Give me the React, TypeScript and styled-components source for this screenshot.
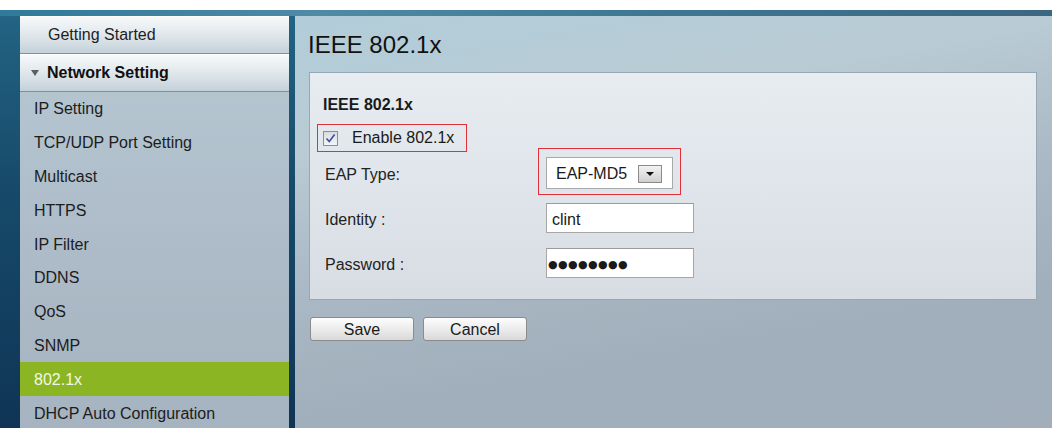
import React from 'react';
import styled, { createGlobalStyle, css } from 'styled-components';

const GlobalStyle = createGlobalStyle`
  html, body {
    margin: 0;
    padding: 0;
    background: #ffffff;
    font-family: "Liberation Sans", Arial, sans-serif;
    color: #1c1c1c;
  }
`;

const Page = styled.div`
  width: 1052px;
  height: 428px;
  padding-top: 10px;
  box-sizing: border-box;
  display: flex;
  flex-direction: column;
  overflow: hidden;
`;

const TopBand = styled.div`
  height: 6px;
  background: linear-gradient(to right, #2f7a9a, #4f8aa6 30%, #3f7894 60%, #3c6781);
`;

const Body = styled.div`
  flex: 1;
  display: flex;
  gap: 6px;
  padding-left: 20px;
  background: linear-gradient(to bottom, #236383, #174b6b 40%, #0f3455);
  min-height: 0;
`;

const Sidebar = styled.nav`
  width: 269px;
  display: flex;
  flex-direction: column;
  background: linear-gradient(to bottom, #b7c9d4, #aebdc9 50%, #a6b3c0);
  overflow: hidden;
`;

const Header = styled.div<{ $indent: number; $bold?: boolean }>`
  height: 36px;
  flex-shrink: 0;
  display: flex;
  align-items: center;
  gap: 8px;
  padding-left: ${p => p.$indent}px;
  background: linear-gradient(to bottom, #f7f9fa, #e2e9ed 45%, #c4d1d9);
  border-top: 1px solid #ffffff;
  border-bottom: 1px solid #7d909c;
  font-size: 16px;
  color: #1e1e1e;
  ${p =>
    p.$bold &&
    css`
      font-weight: bold;
      color: #101010;
    `}
`;

const Caret = styled.span`
  width: 0;
  height: 0;
  border-left: 4px solid transparent;
  border-right: 4px solid transparent;
  border-top: 6px solid #5b5f63;
`;

const NavItem = styled.div<{ $active?: boolean }>`
  height: 33.8px;
  flex-shrink: 0;
  display: flex;
  align-items: center;
  padding: 1px 0 0 14px;
  box-sizing: border-box;
  font-size: 16px;
  color: #1c1c1c;
  ${p =>
    p.$active &&
    css`
      background: #8cb523;
      color: #f4f7e8;
    `}
`;

const Main = styled.main`
  flex: 1;
  display: flex;
  flex-direction: column;
  padding: 15px 15px 0 14px;
  background: linear-gradient(170deg, #b1cdd9 0%, #b9cbd5 25%, #aab9c5 50%, #a1aebb 75%, #a2afbb 100%);
`;

const Title = styled.h1`
  margin: 0 0 0 -1px;
  height: 41px;
  font-size: 24px;
  font-weight: normal;
  color: #111;
  line-height: 28px;
`;

const Panel = styled.section`
  width: 728px;
  box-sizing: border-box;
  padding: 23px 0 21px 13px;
  border: 1px solid #97a8b4;
  background: linear-gradient(to bottom, #e6ecf0, #dfe5ea 50%, #d8dde3);
`;

const PanelHeading = styled.h2`
  margin: 0;
  font-size: 16px;
  line-height: 18px;
  font-weight: bold;
  color: #1a1a1a;
`;

const Row = styled.div<{ $top: number; $height: number }>`
  display: grid;
  grid-template-columns: 223px auto;
  align-items: center;
  margin-top: ${p => p.$top}px;
  height: ${p => p.$height}px;
  font-size: 16px;
  color: #222;
`;

const Label = styled.span`
  padding: 3px 0 0 2px;
`;

const CheckHighlight = styled.label`
  margin-left: -6px;
  width: 150px;
  height: 28px;
  box-sizing: border-box;
  border: 1px solid #e0303a;
  display: flex;
  align-items: center;
  gap: 14px;
  padding-left: 5px;
  font-size: 16px;
  color: #1a1a1a;
`;

const CheckBox = styled.span`
  width: 15px;
  height: 15px;
  box-sizing: border-box;
  border: 1px solid #8e8e8e;
  background: linear-gradient(to bottom, #d9dbde, #f4f5f6);
  display: flex;
  align-items: center;
  justify-content: center;
`;

const SelectWrap = styled.div`
  position: relative;
  width: 127px;
  height: 32px;
`;

const SelectHighlight = styled.span`
  position: absolute;
  inset: -9px -8px -6px -8px;
  border: 1px solid #e0303a;
  pointer-events: none;
`;

const SelectBox = styled.div`
  height: 100%;
  box-sizing: border-box;
  border: 1px solid #a9a9a9;
  background: #fff;
  display: flex;
  align-items: center;
  justify-content: space-between;
  padding: 1px 10px 0 9px;
  font-size: 16px;
  color: #1a1a1a;
`;

const DropButton = styled.span`
  width: 24px;
  height: 18px;
  box-sizing: border-box;
  border: 1px solid #8a8a8a;
  background: linear-gradient(to bottom, #f2f2f2, #d0d0d0);
  display: flex;
  align-items: center;
  justify-content: center;
`;

const DropArrow = styled.span`
  width: 0;
  height: 0;
  border-left: 4px solid transparent;
  border-right: 4px solid transparent;
  border-top: 4px solid #111;
`;

const TextInput = styled.input<{ $secret?: boolean }>`
  width: 148px;
  height: 30px;
  box-sizing: border-box;
  border: 1px solid #a7a7a7;
  border-top-color: #9a9a9a;
  background: #fff;
  padding: 3px 5px 0;
  margin: 0;
  font-family: "Liberation Sans", Arial, sans-serif;
  font-size: 16px;
  color: #1a1a1a;
  outline: none;
  ${p =>
    p.$secret &&
    css`
      padding: 2px 0 0 1px;
      font-family: "DejaVu Sans", sans-serif;
      font-size: 11px;
      letter-spacing: 0.4px;
    `}
`;

const Actions = styled.div`
  display: flex;
  gap: 9px;
  margin-top: 17px;
  padding-left: 1px;
`;

const Button = styled.button`
  width: 104px;
  height: 24px;
  box-sizing: border-box;
  border: 1px solid #8b8b8b;
  border-radius: 3px;
  background: linear-gradient(to bottom, #fdfdfd, #ececec 50%, #d9d9d9);
  font-family: "Liberation Sans", Arial, sans-serif;
  font-size: 16px;
  color: #1a1a1a;
  padding: 1px 0 0;
`;

const navItems = [
  'IP Setting',
  'TCP/UDP Port Setting',
  'Multicast',
  'HTTPS',
  'IP Filter',
  'DDNS',
  'QoS',
  'SNMP',
  '802.1x',
  'DHCP Auto Configuration',
];

const CheckMark = () => (
  <svg width="11" height="11" viewBox="0 0 11 11">
    <path d="M1.5 5.5 L4.3 8.6 L9.6 1.6" fill="none" stroke="#3b4ea6" strokeWidth="1.6" />
  </svg>
);

export default function App() {
  return (
    <>
      <GlobalStyle />
      <Page>
        <TopBand />
        <Body>
          <Sidebar>
            <Header $indent={28}>Getting Started</Header>
            <Header $indent={11} $bold>
              <Caret />
              Network Setting
            </Header>
            {navItems.map(item => (
              <NavItem key={item} $active={item === '802.1x'}>
                {item}
              </NavItem>
            ))}
          </Sidebar>
          <Main>
            <Title>IEEE 802.1x</Title>
            <Panel>
              <PanelHeading>IEEE 802.1x</PanelHeading>
              <Row $top={10} $height={28}>
                <CheckHighlight>
                  <CheckBox>
                    <CheckMark />
                  </CheckBox>
                  Enable 802.1x
                </CheckHighlight>
              </Row>
              <Row $top={5} $height={32}>
                <Label>EAP Type:</Label>
                <SelectWrap>
                  <SelectHighlight />
                  <SelectBox>
                    EAP-MD5
                    <DropButton>
                      <DropArrow />
                    </DropButton>
                  </SelectBox>
                </SelectWrap>
              </Row>
              <Row $top={14} $height={30}>
                <Label>Identity :</Label>
                <TextInput type="text" defaultValue="clint" readOnly />
              </Row>
              <Row $top={15} $height={30}>
                <Label>Password :</Label>
                <TextInput type="text" $secret defaultValue="●●●●●●●●" readOnly />
              </Row>
            </Panel>
            <Actions>
              <Button>Save</Button>
              <Button>Cancel</Button>
            </Actions>
          </Main>
        </Body>
      </Page>
    </>
  );
}
